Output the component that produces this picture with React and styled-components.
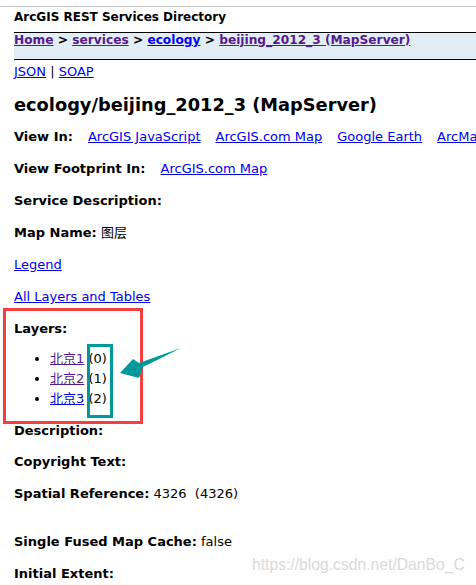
import styled, { createGlobalStyle } from "styled-components";

const GlobalStyle = createGlobalStyle`
    html, body {
        margin: 0;
        padding: 0;
        background: #ffffff;
        overflow: hidden;
    }

    body {
        font-family: "DejaVu Sans", Verdana, "Noto Sans CJK SC", sans-serif;
        font-size: 13px;
        color: #000000;
    }
`;

const Page = styled.div`
    position: relative;
    width: 476px;
    height: 585px;
    overflow: hidden;
    padding-top: 6px;
    box-sizing: border-box;
`;

const TopRule = styled.div`
    border-top: 1px solid #c4c4c4;
`;

const Content = styled.div`
    padding-left: 14px;
`;

const Title = styled.div`
    font-weight: bold;
    font-size: 12px;
    line-height: 16px;
    padding-top: 2px;
    height: 23px;
`;

const Breadcrumb = styled.div`
    background: #e3edf6;
    border-top: 1px solid #000000;
    border-bottom: 1px solid #000000;
    height: 26px;
    font-weight: bold;
    font-size: 12.2px;
    line-height: 15px;
    white-space: nowrap;
`;

const Link = styled.a`
    color: ${(props) => (props.$visited ? "#551a8b" : "#0000ee")};
    text-decoration: underline;
    cursor: pointer;
`;

const Formats = styled.div`
    margin-top: 4px;
    line-height: 16px;
`;

const Heading = styled.h2`
    margin: 16px 0 0;
    font-size: 17.8px;
    line-height: 18px;
    font-weight: bold;
    white-space: nowrap;
`;

const Field = styled.div`
    margin-top: ${(props) => props.$gap ?? 16}px;
    line-height: 16px;
    white-space: nowrap;
    display: flex;
    gap: ${(props) => (props.$spread ? "15px" : "0")};
`;

const Label = styled.b``;

const LayerList = styled.ul`
    margin: 12px 0 0;
    padding-left: 36px;
    line-height: 20px;
`;

const Annotation = styled.div`
    position: absolute;
    left: ${(props) => props.$x}px;
    top: ${(props) => props.$y}px;
    width: ${(props) => props.$w}px;
    height: ${(props) => props.$h}px;
    border: 3px solid ${(props) => props.$color};
    box-sizing: border-box;
    pointer-events: none;
`;

const Arrow = styled.svg`
    position: absolute;
    left: 119px;
    top: 346px;
`;

const Watermark = styled.div`
    position: absolute;
    left: 252px;
    top: 556px;
    font-family: "Liberation Sans", Arial, sans-serif;
    font-size: 15.7px;
    color: #d9d9d9;
    text-shadow: 0 0 1px #ffffff;
    white-space: nowrap;
`;

const layers = [
    { name: "北京1", id: 0, visited: true },
    { name: "北京2", id: 1, visited: true },
    { name: "北京3", id: 2, visited: false },
];

const App = () => {
    return (
        <Page>
            <GlobalStyle />
            <TopRule />
            <Content>
                <Title>ArcGIS REST Services Directory</Title>
                <Breadcrumb>
                    <Link $visited>Home</Link> &gt; <Link $visited>services</Link> &gt;{" "}
                    <Link>ecology</Link> &gt; <Link $visited>beijing_2012_3 (MapServer)</Link>
                </Breadcrumb>
                <Formats>
                    <Link>JSON</Link> | <Link>SOAP</Link>
                </Formats>
                <Heading>ecology/beijing_2012_3 (MapServer)</Heading>
                <Field $gap={15} $spread>
                    <Label>View In:</Label>
                    <Link>ArcGIS JavaScript</Link>
                    <Link>ArcGIS.com Map</Link>
                    <Link>Google Earth</Link>
                    <Link>ArcMap</Link>
                </Field>
                <Field $spread>
                    <Label>View Footprint In:</Label>
                    <Link>ArcGIS.com Map</Link>
                </Field>
                <Field>
                    <Label>Service Description:</Label>
                </Field>
                <Field>
                    <Label>Map Name:</Label>&nbsp;图层
                </Field>
                <Field>
                    <Link>Legend</Link>
                </Field>
                <Field>
                    <Link>All Layers and Tables</Link>
                </Field>
                <Field>
                    <Label>Layers:</Label>
                </Field>
                <LayerList>
                    {layers.map((layer) => (
                        <li key={layer.id}>
                            <Link $visited={layer.visited}>{layer.name}</Link> ({layer.id})
                        </li>
                    ))}
                </LayerList>
                <Field $gap={14}>
                    <Label>Description:</Label>
                </Field>
                <Field $gap={15}>
                    <Label>Copyright Text:</Label>
                </Field>
                <Field>
                    <Label>Spatial Reference:</Label>&nbsp;4326&nbsp;&nbsp;(4326)
                </Field>
                <Field $gap={32}>
                    <Label>Single Fused Map Cache:</Label>&nbsp;false
                </Field>
                <Field>
                    <Label>Initial Extent:</Label>
                </Field>
            </Content>

            <Annotation $x={3} $y={308} $w={140} $h={116} $color="#f2403f" />
            <Annotation $x={87} $y={344} $w={26} $h={74} $color="#00999a" />
            <Arrow width="64" height="34" viewBox="0 0 64 34">
                <polygon points="1,27 14,13 20,17 62,2 24,21 20,32" fill="#00999a" />
            </Arrow>
            <Watermark>https://blog.csdn.net/DanBo_C</Watermark>
        </Page>
    );
};

export default App;
